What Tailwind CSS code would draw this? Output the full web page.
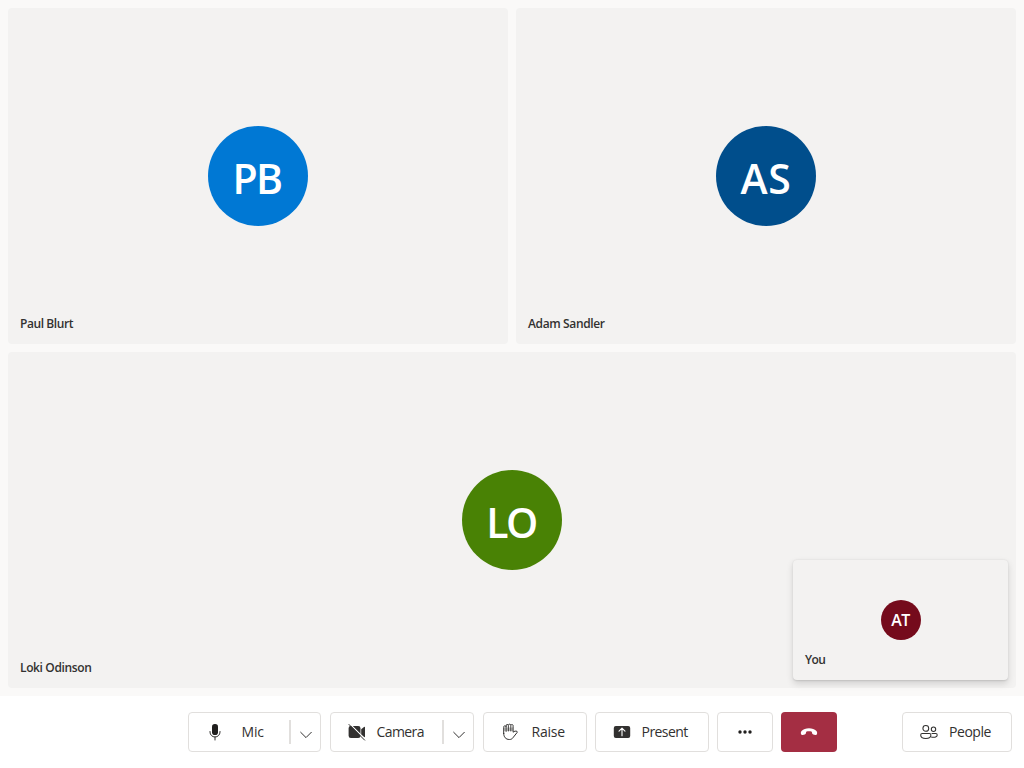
<!DOCTYPE html>
<html lang="en">
<head>
<meta charset="utf-8">
<title>Call</title>
<script src="https://cdn.jsdelivr.net/npm/@tailwindcss/browser@4"></script>
</head>
<body class="w-[1024px] h-[768px] overflow-hidden flex flex-col bg-white text-[#323130] font-['Open_Sans','Noto_Sans',sans-serif]">
<main class="relative h-[696px] shrink-0 bg-[#faf9f8] p-2 grid grid-cols-2 grid-rows-2 gap-2">
  <section class="relative rounded bg-[#f3f2f1] flex items-center justify-center">
    <div class="size-[100px] rounded-full bg-[#0078d4] text-white flex items-center justify-center text-[41px] leading-none font-semibold"><span class="tracking-[-1.6px] pt-[4px] pr-[2px]">PB</span></div>
    <p class="absolute left-3 bottom-3 text-xs font-semibold whitespace-nowrap tracking-[-0.42px]">Paul Blurt</p>
  </section>
  <section class="relative rounded bg-[#f3f2f1] flex items-center justify-center">
    <div class="size-[100px] rounded-full bg-[#004e8c] text-white flex items-center justify-center text-[41px] leading-none font-semibold"><span class="tracking-[0.6px] pt-[4px]">AS</span></div>
    <p class="absolute left-3 bottom-3 text-xs font-semibold whitespace-nowrap tracking-[-0.37px]">Adam Sandler</p>
  </section>
  <section class="relative col-span-2 rounded bg-[#f3f2f1] flex items-center justify-center">
    <div class="size-[100px] rounded-full bg-[#498205] text-white flex items-center justify-center text-[41px] leading-none font-semibold"><span class="tracking-[-2.6px] pt-[4px] pr-[2px]">LO</span></div>
    <p class="absolute left-3 bottom-3 text-xs font-semibold whitespace-nowrap tracking-[-0.37px]">Loki Odinson</p>
  </section>
  <aside class="absolute right-4 bottom-4 w-[215px] h-[120px] rounded bg-[#f3f2f1] shadow-[0_3.2px_7.2px_rgba(0,0,0,0.132),0_0.6px_1.8px_rgba(0,0,0,0.108)] flex items-center justify-center">
    <div class="size-10 rounded-full bg-[#750b1c] text-white flex items-center justify-center text-[16px] leading-none font-semibold"><span class="tracking-[-0.5px]">AT</span></div>
    <p class="absolute left-3 bottom-3 text-xs font-semibold whitespace-nowrap tracking-[-0.6px]">You</p>
  </aside>
</main>
<footer class="h-[72px] flex items-center pl-[188px] pr-3 text-[14px] leading-5">
  <div class="flex items-center gap-2">
    <div class="w-[133px] mr-px h-10 flex items-center rounded border border-[#e1dfdd]">
      <button class="w-[100px] h-full flex items-center pl-[15.500px] gap-[17px]">
        <svg class="size-5 shrink-0" viewBox="0 0 20 20" fill="none"><rect x="7" y="2" width="6" height="11" rx="2.8" fill="#201f1e"/><path d="M5 9.5v.5a5 5 0 0 0 10 0v-.5M10 15v3" stroke="#323130" stroke-width="1" stroke-linecap="round"/></svg>
        <span class="tracking-[-0.2px]">Mic</span>
      </button>
      <span class="w-[2px] h-6 bg-[#e1dfdd]"></span>
      <button class="w-[29px] h-full flex items-center justify-center"><svg class="w-3 h-2 mt-[5px]" viewBox="0 0 12 8" fill="none" stroke="#323130"><path d="M.4 1 6 6.600 11.600 1"/></svg></button>
    </div>
    <div class="w-[144px] mr-px h-10 flex items-center rounded border border-[#e1dfdd]">
      <button class="w-[111px] h-full flex items-center pl-[16px] gap-[9.500px]">
        <svg class="size-5 shrink-0" viewBox="0 0 20 20"><path d="M3.500 4h7.700a2.300 2.300 0 0 1 2.300 2.300v7.400a2.300 2.300 0 0 1-2.300 2.300H3.900A2.300 2.300 0 0 1 1.600 13.700V6.300Q1.600 4 3.500 4ZM14.200 7.200 17 5q1-.5 1 .5v9q0 1-1 .5l-2.800-2.200Z" fill="#323130"/><path d="M2.600 1.700 18.800 17.900" stroke="#fff" stroke-width="1.200"/><path d="M1.700 2.200 17.900 18.400" stroke="#323130" stroke-width="1"/></svg>
        <span class="tracking-[-0.6px]">Camera</span>
      </button>
      <span class="w-[2px] h-6 bg-[#e1dfdd]"></span>
      <button class="w-[29px] h-full flex items-center justify-center"><svg class="w-3 h-2 mt-[5px]" viewBox="0 0 12 8" fill="none" stroke="#323130"><path d="M.4 1 6 6.600 11.600 1"/></svg></button>
    </div>
    <button class="w-[103.600px] h-10 flex items-center rounded border border-[#e1dfdd] pl-[16.500px] gap-[11px]">
      <svg class="size-5 shrink-0" viewBox="0 0 20 20" fill="none" stroke="#323130" stroke-linejoin="round" stroke-linecap="round"><path d="M2.700 11.500V5.400a1.200 1.200 0 0 1 2.400-.6V4a1.150 1.150 0 0 1 2.300-.6 1.200 1.200 0 0 1 2.400 0 1.200 1.200 0 0 1 2.300.9v5.900c1.200-1.100 2.800-1.400 3.900-.8.500.3.500.7.100 1.100l-4.300 5.400c-.7 1-1.700 1.600-3.400 1.600-3.600 0-5.700-2.500-5.700-6Z"/><path d="M5.100 5v4.500M7.400 4v5M9.800 4v5" stroke-width=".9"/><path d="M3 5.500h9V9H3Z" fill="#323130" fill-opacity=".3" stroke="none"/></svg>
      <span class="tracking-[-0.25px]">Raise</span>
    </button>
    <button class="w-[114px] h-10 flex items-center rounded border border-[#e1dfdd] pl-[16px] gap-[10px]">
      <svg class="size-5 shrink-0" viewBox="0 0 20 20" fill="none"><rect x="1.800" y="4" width="16.400" height="12" rx="2" fill="#323130"/><path d="M10 13.800V6.500M7 9.200l3-3 3 3" stroke="#fff" stroke-width="1.100" stroke-linecap="round" stroke-linejoin="round"/></svg>
      <span class="tracking-[-0.58px]">Present</span>
    </button>
    <button class="w-14 h-10 flex items-center justify-center rounded border border-[#e1dfdd]" aria-label="More"><svg class="size-5" viewBox="0 0 20 20" fill="#201f1e"><circle cx="5" cy="10" r="1.700"/><circle cx="10" cy="10" r="1.700"/><circle cx="15" cy="10" r="1.700"/></svg></button>
    <button class="w-14 h-10 flex items-center justify-center rounded bg-[#a42e43]" aria-label="Leave"><svg class="size-5" viewBox="0 0 20 20" fill="#fff"><path d="M10 6.200c3.200 0 5.600.9 7.200 2.500 1 1 1.100 2.100.8 3.300-.2.800-.9 1.100-1.700.9l-2-.4c-.7-.1-1.100-.6-1.200-1.200l-.3-1.500c-1.800-.6-3.800-.6-5.600 0l-.3 1.500c-.1.600-.5 1.100-1.200 1.200l-2 .4c-.8.200-1.500-.1-1.700-.9-.3-1.200-.2-2.300.8-3.300C4.400 7.100 6.800 6.200 10 6.200Z"/></svg></button>
  </div>
  <button class="ml-auto w-[110px] h-10 flex items-center rounded border border-[#e1dfdd] pl-[16px] gap-[10px]">
    <svg class="size-5 shrink-0" viewBox="0 0 20 20" fill="none" stroke="#323130" stroke-width="1.050"><circle cx="6.800" cy="6.400" r="2.900"/><circle cx="14.500" cy="7.200" r="2.200"/><path d="M3.200 11.500h7.200a1.500 1.500 0 0 1 1.500 1.500c0 2.200-2 3.500-5.100 3.500S1.700 15.200 1.700 13a1.500 1.500 0 0 1 1.500-1.500ZM12.600 11.500h4.200a1.400 1.400 0 0 1 1.400 1.400c0 1.500-1.700 2.300-3.900 2.300-.8 0-1.500-.1-2.100-.3"/></svg>
    <span class="tracking-[-0.45px]">People</span>
  </button>
</footer>
</body>
</html>
